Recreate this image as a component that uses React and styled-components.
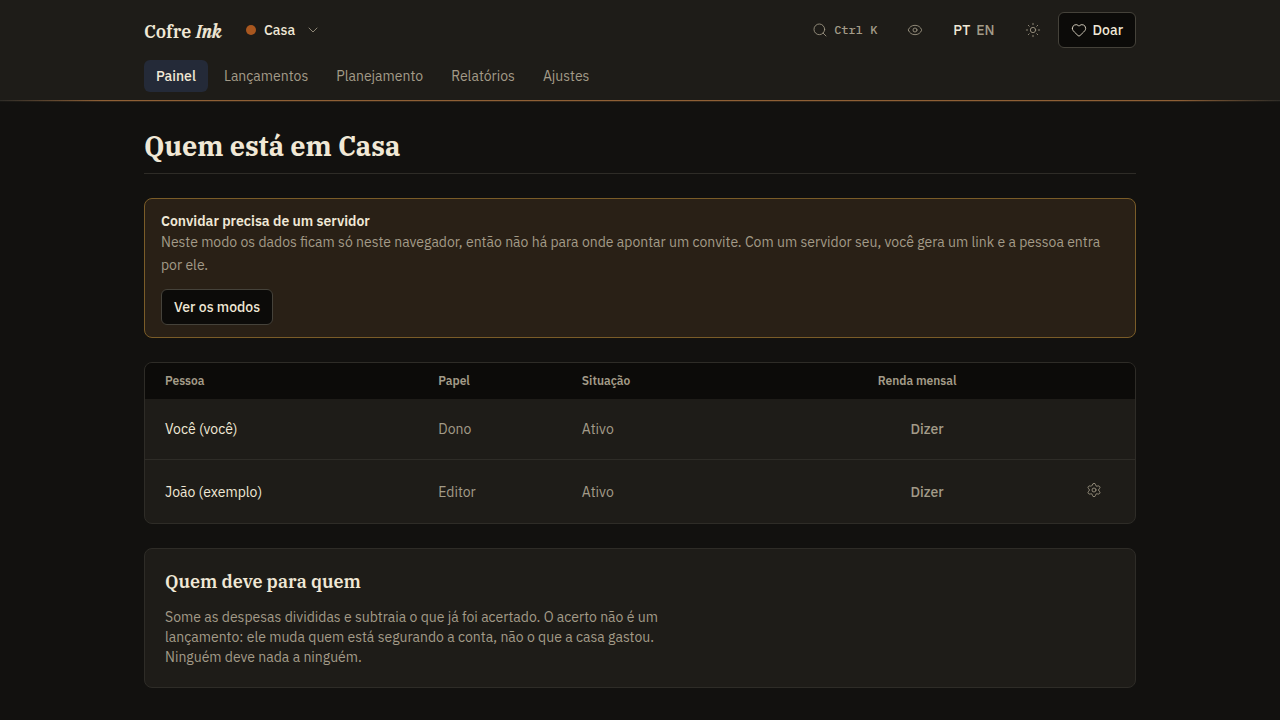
import React, {useState} from "react";
import styled, {createGlobalStyle} from "styled-components";
import {ChevronDown, Eye, Heart, Search, Settings, Sun} from "lucide-react";

const colors = {
    page: "#12110f",
    surface: "#1e1c18",
    sunken: "#0c0b09",
    line: "#2e2c27",
    lineStrong: "#45423a",
    text: "#f0e8d6",
    muted: "#a39b88",
    amber: "#7a5c28",
};

const serif = `"IBM Plex Serif", "DejaVu Serif Condensed", "DejaVu Serif", serif`;

const GlobalStyle = createGlobalStyle`
  * {
    box-sizing: border-box;
  }
  body {
    margin: 0;
    background: ${colors.page};
    color: ${colors.text};
    font-family: "IBM Plex Sans", "Liberation Sans", sans-serif;
    font-size: 14px;
    line-height: 20px;
  }
  h1, h2, p {
    margin: 0;
  }
`;

const Container = styled.div`
  width: 100%;
  max-width: 1024px;
  margin: 0 auto;
  padding: 0 16px;
`;

const Header = styled.header`
  padding: 12px 0 8px;
  background: ${colors.surface};
`;

const HeaderRule = styled.div`
  height: 2px;
  background: linear-gradient(to right, #2e2c27, #8f6036 8%, #8f6036 92%, #2e2c27);
  border-bottom: 1px solid rgba(18, 17, 15, 0.75);
`;

const Bar = styled.div`
  display: flex;
  align-items: center;
  gap: ${({$gap}) => $gap}px;
`;

const TopBar = styled(Bar)`
  justify-content: space-between;
  margin-bottom: 12px;
`;

const Logo = styled.a`
  padding-top: 4px;
  color: ${colors.text};
  font-family: ${serif};
  font-size: 18px;
  font-weight: 600;
  line-height: 28px;
  text-decoration: none;

  em {
    font-weight: 400;
    text-shadow: 1px 0 currentColor;
  }
`;

const Button = styled.button`
  display: inline-flex;
  align-items: center;
  gap: 6px;
  height: 36px;
  padding: 0 12px;
  border: 1px solid ${({$solid}) => ($solid ? colors.lineStrong : "transparent")};
  border-radius: 6px;
  background: ${({$solid}) => ($solid ? colors.sunken : "transparent")};
  color: ${({$solid, $bright}) => ($solid || $bright ? colors.text : colors.muted)};
  font: inherit;
  font-weight: 500;
  cursor: pointer;
  vertical-align: top;

  svg {
    flex: none;
    width: 16px;
    height: 16px;
    stroke-width: 1.25;
  }
`;

const SpaceButton = styled(Button)`
  gap: 8px;

  svg {
    margin-left: 2px;
    color: ${colors.muted};
  }
`;

const Dot = styled.span`
  width: 10px;
  height: 10px;
  border-radius: 50%;
  background: #a9571f;
`;

const Kbd = styled.kbd`
  font-family: "IBM Plex Mono", "Liberation Mono", monospace;
  font-size: 12px;
  font-weight: 500;
`;

const Lang = styled.span`
  color: ${({$active}) => ($active ? colors.text : colors.muted)};
`;

const NavLink = styled.a`
  padding: 6px 12px;
  border-radius: 6px;
  background: ${({$active}) => ($active ? "#242a38" : "transparent")};
  color: ${({$active}) => ($active ? colors.text : colors.muted)};
  font-weight: ${({$active}) => ($active ? 500 : 400)};
  text-decoration: none;
`;

const Main = styled(Container)`
  display: flex;
  flex-direction: column;
  gap: 24px;
  padding-top: 24px;
  padding-bottom: 32px;
`;

const PageTitle = styled.h1`
  padding-bottom: 8px;
  border-bottom: 1px solid ${colors.line};
  font-family: ${serif};
  font-size: 27px;
  font-weight: 700;
  line-height: 39px;
`;

const Panel = styled.section`
  overflow: hidden;
  border: 1px solid ${colors.line};
  border-radius: 8px;
  background: ${colors.surface};
`;

const Notice = styled(Panel)`
  padding: 12px 16px;
  border-color: ${colors.amber};
  background: #292016;

  p {
    margin-bottom: 12px;
    color: ${colors.muted};
    line-height: 23px;
  }
`;

const NoticeTitle = styled.strong`
  display: block;
  font-weight: 600;
`;

const Table = styled.table`
  width: 100%;
  border-collapse: separate;
  border-spacing: 0;
  table-layout: fixed;
`;

const Th = styled.th`
  width: ${({$width}) => $width};
  height: 36px;
  padding: 0 20px;
  background: ${colors.sunken};
  color: ${colors.muted};
  font-size: 12px;
  font-weight: 600;
  line-height: 16px;
  text-align: ${({$right}) => ($right ? "right" : "left")};
`;

const Td = styled.td`
  padding: 12px 20px;
  color: ${({$bright}) => ($bright ? colors.text : colors.muted)};
  text-align: ${({$right}) => ($right ? "right" : "left")};

  tr:not(:last-child) > & {
    border-bottom: 1px solid ${colors.line};
  }
`;

const ActionTd = styled(Td)`
  padding-bottom: ${({$filled}) => ($filled ? 15 : 12)}px;
`;

const Card = styled(Panel)`
  padding: 20px;

  h2 {
    margin-bottom: 12px;
    font-family: ${serif};
    font-size: 18px;
    font-weight: 600;
    line-height: 26px;
  }

  p {
    max-width: 512px;
    color: ${colors.muted};
  }
`;

const sections = ["Painel", "Lançamentos", "Planejamento", "Relatórios", "Ajustes"];

const people = [
    {name: "Você (você)", role: "Dono", status: "Ativo", editable: false},
    {name: "João (exemplo)", role: "Editor", status: "Ativo", editable: true},
];

export default function App() {
    const [lang, setLang] = useState("PT");
    const [section, setSection] = useState("Painel");

    return (<>
        <GlobalStyle/>
        <Header>
            <Container>
                <TopBar>
                    <Bar $gap={12}>
                        <Logo href="#">Cofre <em>Ink</em></Logo>
                        <SpaceButton $bright>
                            <Dot/>
                            Casa
                            <ChevronDown/>
                        </SpaceButton>
                    </Bar>
                    <Bar $gap={4}>
                        <Button aria-label="Buscar">
                            <Search/>
                            <Kbd>Ctrl K</Kbd>
                        </Button>
                        <Button aria-label="Ocultar valores"><Eye/></Button>
                        <Button aria-label="Idioma" onClick={() => setLang(lang === "PT" ? "EN" : "PT")}>
                            <Lang $active={lang === "PT"}>PT</Lang>
                            <Lang $active={lang === "EN"}>EN</Lang>
                        </Button>
                        <Button aria-label="Tema"><Sun/></Button>
                        <Button $solid><Heart/>Doar</Button>
                    </Bar>
                </TopBar>
                <Bar as="nav" $gap={4}>
                    {sections.map(name => (
                        <NavLink key={name} href="#" $active={name === section} onClick={() => setSection(name)}>
                            {name}
                        </NavLink>
                    ))}
                </Bar>
            </Container>
        </Header>
        <HeaderRule/>

        <Main as="main">
            <PageTitle>Quem está em Casa</PageTitle>

            <Notice>
                <NoticeTitle>Convidar precisa de um servidor</NoticeTitle>
                <p>
                    Neste modo os dados ficam só neste navegador, então não há para onde apontar um convite.
                    Com um servidor seu, você gera um link e a pessoa entra por ele.
                </p>
                <Button $solid>Ver os modos</Button>
            </Notice>

            <Panel>
                <Table>
                    <thead>
                        <tr>
                            <Th $width="27.6%">Pessoa</Th>
                            <Th $width="14.5%">Papel</Th>
                            <Th $width="20%">Situação</Th>
                            <Th $width="21.9%" $right>Renda mensal</Th>
                            <Th $width="16%" aria-label="Ações"/>
                        </tr>
                    </thead>
                    <tbody>
                        {people.map(person => (
                            <tr key={person.name}>
                                <Td $bright>{person.name}</Td>
                                <Td>{person.role}</Td>
                                <Td>{person.status}</Td>
                                <Td $right><Button>Dizer</Button></Td>
                                <ActionTd $right $filled={person.editable}>
                                    {person.editable &&
                                        <Button aria-label={`Ajustar ${person.name}`}><Settings/></Button>}
                                </ActionTd>
                            </tr>
                        ))}
                    </tbody>
                </Table>
            </Panel>

            <Card>
                <h2>Quem deve para quem</h2>
                <p>
                    Some as despesas divididas e subtraia o que já foi acertado. O acerto não é um
                    lançamento: ele muda quem está segurando a conta, não o que a casa gastou.
                </p>
                <p>Ninguém deve nada a ninguém.</p>
            </Card>
        </Main>
    </>);
}
